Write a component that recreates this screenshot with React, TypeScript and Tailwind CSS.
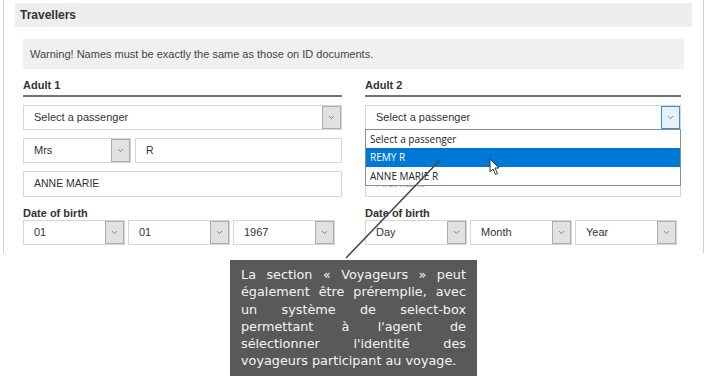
import { ChevronDown } from "lucide-react";

function Arrow({ active = false }: { active?: boolean }) {
  return (
    <div
      className={
        active
          ? "flex w-[19px] shrink-0 items-center justify-center border border-[#3c8fd8] bg-[#e5f1fb]"
          : "flex w-[19px] shrink-0 items-center justify-center border border-[#adadad] bg-[#e1e1e1]"
      }
    >
      <ChevronDown size={9} strokeWidth={2} className="text-[#606060]" />
    </div>
  );
}

function Select({ label, w, active = false }: { label?: string; w: string; active?: boolean }) {
  return (
    <div className={`flex h-[25px] border border-[#d6d6d6] bg-white ${w}`}>
      <div className="flex flex-1 items-center pl-[10px] text-[11px] text-[#333]">{label}</div>
      <Arrow active={active} />
    </div>
  );
}

function Input({ value, placeholder, w, h = "h-[25px]" }: { value?: string; placeholder?: string; w: string; h?: string }) {
  return (
    <div className={`flex items-center border border-[#d6d6d6] bg-white pl-[10px] text-[10.5px] ${h} ${w}`}>
      {value ? <span className="text-[#333]">{value}</span> : <span className="text-[#aaa]">{placeholder}</span>}
    </div>
  );
}

function Traveller({ title, civ, last, first, dob, width, active = false, hidden = false }: {
  title: string; civ?: string; last?: string; first?: string; dob: string[]; width: string; active?: boolean; hidden?: boolean;
}) {
  return (
    <div className={`flex flex-col ${width}`}>
      <div className="h-[19px] border-b-2 border-[#737373] text-[11px] font-bold leading-[14px] text-[#333]">
        {title}
      </div>
      <div className="mt-[8px]">
        <Select label="Select a passenger" w="w-full" active={active} />
      </div>
      <div className="mt-[8px] flex gap-[4px]">
        <Select label={civ} w="w-[108px]" />
        <Input value={last} placeholder={hidden ? "" : "Last name"} w="flex-1" />
      </div>
      <div className="mt-[8px]">
        <Input value={first} placeholder="First name" w="w-full" h="h-[26px]" />
      </div>
      <div className="mt-[9px] text-[11px] font-bold leading-[14px] text-[#333]">Date of birth</div>
      <div className="flex gap-[3px]">
        {dob.map((d, i) => (
          <Select key={i} label={d} w="w-[102px]" />
        ))}
      </div>
    </div>
  );
}

const lines = [
  "La section « Voyageurs » peut",
  "également être préremplie, avec",
  "un système de select-box",
  "permettant à l'agent de",
  "sélectionner l'identité des",
];

export default function App() {
  return (
    <div className="relative h-[376px] w-[706px] overflow-hidden bg-white font-['Liberation_Sans',Arial,sans-serif]">
      {/* Form panel */}
      <div className="ml-[3px] h-[253px] w-[701px] border-x border-[#cfcfcf] px-[11px] pt-[3px]">
        <div className="flex h-[24px] items-center bg-[#eeeeee] pl-[5px] text-[12px] font-bold text-[#333]">
          Travellers
        </div>
        <div className="mx-[8px] mt-[12px] flex h-[30px] items-center bg-[#f0f0f0] pl-[7px] text-[11px] text-[#444]">
          Warning! Names must be exactly the same as those on ID documents.
        </div>
        <div className="mx-[8px] mt-[9px] flex gap-[23px]">
          <Traveller title="Adult 1" width="w-[319px]" civ="Mrs" last="R" first="ANNE MARIE" dob={["01", "01", "1967"]} />
          <Traveller title="Adult 2" width="w-[316px]" active hidden dob={["Day", "Month", "Year"]} />
        </div>
      </div>

      {/* Open dropdown */}
      <div className="absolute left-[365px] top-[129px] w-[316px] border border-[#8c8c8c] bg-white font-['Open_Sans',sans-serif] text-[10px] text-[#222]">
        <div className="flex h-[18px] items-center pl-[4px]">Select a passenger</div>
        <div className="flex h-[19px] items-center bg-[#0078d7] pl-[4px] text-white">REMY R</div>
        <div className="flex h-[18px] items-center pl-[4px]">ANNE MARIE R</div>
      </div>

      {/* Pointer line */}
      <svg className="absolute left-0 top-0" width="706" height="376">
        <line x1="440" y1="160" x2="346" y2="258" stroke="#4a4a4a" strokeWidth="1.6" />
      </svg>

      {/* Mouse cursor */}
      <svg className="absolute left-[489px] top-[158px]" width="12" height="18" viewBox="0 0 12 18">
        <path d="M1 1 L1 14 L4 11 L6.5 16.5 L8.5 15.5 L6 10 L10 10 Z" fill="#fff" stroke="#333" strokeWidth="1" strokeLinejoin="round" />
      </svg>

      {/* Callout */}
      <div className="absolute left-[230px] top-[260px] h-[120px] w-[247px] bg-[#595959] px-[11px] pt-[6px] font-['DejaVu_Sans',sans-serif] text-[12.8px] leading-[17.3px] text-[#f4f4f4]">
        {lines.map((l) => (
          <div key={l} className="whitespace-nowrap text-justify [text-align-last:justify]">
            {l}
          </div>
        ))}
        <div className="whitespace-nowrap">voyageurs participant au voyage.</div>
      </div>
    </div>
  );
}
